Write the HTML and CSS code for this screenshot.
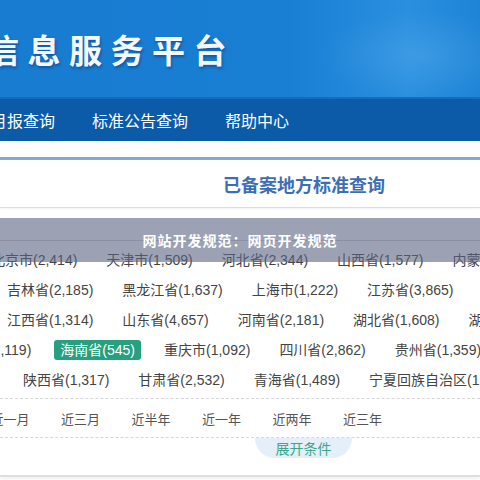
FILE: index.html
```html
<!DOCTYPE html>
<html lang="zh-CN">
<head>
<meta charset="utf-8">
<title>已备案地方标准查询</title>
<link rel="stylesheet" href="styles.css">
</head>
<body>
<header class="top">
  <h1 class="brand">信息服务平台</h1>
  <div class="glow"></div>
</header>
<nav class="nav">
  <a class="nav-item first">月报查询</a>
  <a class="nav-item">标准公告查询</a>
  <a class="nav-item">帮助中心</a>
</nav>
<div class="gap"></div>
<section class="panel">
  <div class="panel-title"><h2>已备案地方标准查询</h2></div>
  <div class="spacer"></div>
  <div class="filters">
    <div class="regions">
      <div class="row r1">
        <span class="item">北京市(2,414)</span>
        <span class="item">天津市(1,509)</span>
        <span class="item">河北省(2,344)</span>
        <span class="item">山西省(1,577)</span>
        <span class="item">内蒙古自治区(1,203)</span>
      </div>
      <div class="row r2">
        <span class="item">吉林省(2,185)</span>
        <span class="item">黑龙江省(1,637)</span>
        <span class="item">上海市(1,222)</span>
        <span class="item">江苏省(3,865)</span>
        <span class="item">浙江省(2,990)</span>
      </div>
      <div class="row r3">
        <span class="item">江西省(1,314)</span>
        <span class="item">山东省(4,657)</span>
        <span class="item">河南省(2,181)</span>
        <span class="item">湖北省(1,608)</span>
        <span class="item">湖南省(1,470)</span>
      </div>
      <div class="row r4">
        <span class="item">广西壮族自治区(1,119)</span>
        <span class="item active">海南省(545)</span>
        <span class="item">重庆市(1,092)</span>
        <span class="item">四川省(2,862)</span>
        <span class="item">贵州省(1,359)</span>
      </div>
      <div class="row r5">
        <span class="item">陕西省(1,317)</span>
        <span class="item">甘肃省(2,532)</span>
        <span class="item">青海省(1,489)</span>
        <span class="item">宁夏回族自治区(1,021)</span>
      </div>
    </div>
    <div class="periods">
      <span class="period">近一月</span>
      <span class="period">近三月</span>
      <span class="period">近半年</span>
      <span class="period">近一年</span>
      <span class="period">近两年</span>
      <span class="period">近三年</span>
    </div>
  </div>
  <div class="toggle-wrap"><span class="toggle">展开条件</span></div>
</section>
<div class="notice">网站开发规范：网页开发规范</div>
</body>
</html>
```

FILE: styles.css
```css
html, body {
  margin: 0;
  padding: 0;
  background: #fff;
}
body {
  width: 480px;
  height: 480px;
  overflow: hidden;
  position: relative;
  font-family: "Liberation Sans", "Noto Sans CJK SC", sans-serif;
}
.top {
  height: 97px;
  border-bottom: 2px solid #176bbd;
  background: linear-gradient(90deg, #187cd1 0%, #197fd3 60%, #2a8fdf 85%, #1e84d6 100%);
  display: flex;
  align-items: center;
  overflow: hidden;
  position: relative;
}
.brand {
  margin: 0 0 0 -14px;
  font-family: "Noto Sans CJK SC", sans-serif;
  font-size: 33px;
  font-weight: 700;
  letter-spacing: 8.5px;
  color: #f4f8fc;
  text-shadow: 1px 2px 3px rgba(0, 40, 100, 0.45);
  white-space: nowrap;
  line-height: 1;
  padding-top: 2px;
}
.glow {
  position: absolute;
  right: -40px;
  top: 10px;
  width: 200px;
  height: 90px;
  background: radial-gradient(ellipse at center, rgba(120, 190, 245, 0.25), rgba(120, 190, 245, 0) 70%);
}
.nav {
  height: 42px;
  background: #0b5ba8;
  display: flex;
  align-items: center;
  gap: 37px;
  white-space: nowrap;
  overflow: hidden;
}
.nav-item {
  font-family: "Noto Sans CJK SC", sans-serif;
  font-size: 16px;
  color: #fff;
  line-height: 42px;
}
.nav-item.first {
  margin-left: -9px;
}
.gap {
  height: 16px;
}
.panel {
  border-top: 3px solid #87a6d4;
  border-bottom: 2px solid #dedede;
  box-shadow: 0 2px 3px rgba(0, 0, 0, 0.06);
  padding-bottom: 17px;
}
.panel-title {
  height: 47px;
  border-bottom: 1px solid #dcdcdc;
  box-shadow: 0 1px 2px rgba(0, 0, 0, 0.05);
  display: flex;
  align-items: center;
  padding-left: 223px;
}
.panel-title h2 {
  margin: 0;
  font-family: "Noto Sans CJK SC", sans-serif;
  font-size: 18px;
  font-weight: 700;
  color: #3c6eb6;
  line-height: 1;
  white-space: nowrap;
}
.spacer {
  height: 32px;
}
.filters {
  border-top: 1px solid #d2d2d2;
  overflow: hidden;
}
.regions {
  padding: 4px 0 3px;
}
.row {
  height: 30px;
  display: flex;
  align-items: center;
  gap: 17px;
  white-space: nowrap;
}
.r1 { margin-left: -15px; }
.r2 { margin-left: 1px; }
.r3 { margin-left: 1px; }
.r4 { margin-left: -116px; }
.r5 { margin-left: 17px; }
.item {
  padding: 0 6px;
  font-size: 14px;
  color: #444;
  line-height: 20px;
  border-radius: 3px;
  flex: none;
}
.item.active {
  background: #27a07f;
  color: #fff;
}
.periods {
  height: 38px;
  border-top: 1px dashed #d6d6d6;
  border-bottom: 1px dashed #d6d6d6;
  display: flex;
  align-items: center;
  gap: 31.5px;
  padding-left: 0;
  white-space: nowrap;
}
.period {
  font-family: "Noto Sans CJK SC", sans-serif;
  font-size: 13px;
  color: #555;
  flex: none;
}
.period:first-child {
  margin-left: -9.5px;
}
.toggle-wrap {
  display: flex;
  padding-left: 255px;
}
.toggle {
  width: 97px;
  height: 20px;
  background: #e4eff9;
  border-radius: 0 0 22px 22px;
  color: #3ba68a;
  font-family: "Noto Sans CJK SC", sans-serif;
  font-size: 14px;
  line-height: 20px;
  text-align: center;
}
.notice {
  position: absolute;
  left: 0;
  right: 0;
  top: 218px;
  height: 44px;
  background: rgba(90, 100, 130, 0.6);
  color: #fff;
  font-family: "Noto Sans CJK SC", sans-serif;
  font-weight: 700;
  font-size: 14px;
  letter-spacing: 1px;
  display: flex;
  align-items: center;
  justify-content: center;
}
```
